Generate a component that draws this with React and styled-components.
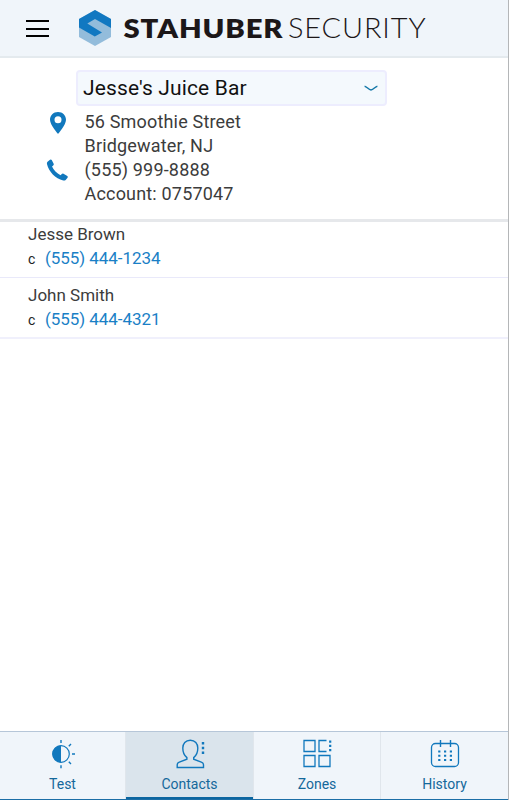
import React, { useState } from "react";
import styled, { createGlobalStyle } from "styled-components";

const contacts = [
  { name: "Jesse Brown", type: "c", phone: "(555) 444-1234" },
  { name: "John Smith", type: "c", phone: "(555) 444-4321" },
];

const Logo = () => (
  <svg width="350" height="40" viewBox="0 0 350 40">
    <path d="M18 2L34 11V29L18 38L2 29V11Z" fill="#93bcdb" />
    <path
      d="M18 2L34 11V20L18 11L10.3 15.6L25 24.4L17.8 28.6L2 19.6V11Z"
      fill="#1178c1"
    />
    <StBrandText
      x="46.5"
      y="29.5"
      $weight={800}
      textLength="160"
      lengthAdjust="spacingAndGlyphs"
    >
      STAHUBER
    </StBrandText>
    <StBrandText
      x="211"
      y="29.5"
      $weight={300}
      textLength="138.5"
      lengthAdjust="spacingAndGlyphs"
    >
      SECURITY
    </StBrandText>
  </svg>
);

const TestIcon = () => (
  <svg width="32" height="32" viewBox="0 0 32 32" fill="none" stroke="#1178bd">
    <circle cx="14" cy="16" r="8.3" strokeWidth="1.2" />
    <path d="M14 7.5A8.5 8.5 0 0 0 14 24.5Z" fill="#1178bd" stroke="none" />
    <path
      d="M14 2V5M14 27.2V30.2M25 16H28M21.8 8.2L24 6M21.8 23.8L24 26"
      strokeWidth="1.4"
    />
  </svg>
);

const ContactsIcon = () => (
  <svg width="32" height="32" viewBox="0 0 32 32" fill="none" stroke="#1178bd">
    <path
      d="M16.3 2.2C11.5 2.2 8.8 5.7 8.8 10C8.8 14 10.2 17.5 12.9 19.6V21.2L5.3 24.2C3.8 24.8 3.2 25.4 3.2 26.7V29.5H29.5V26.7C29.5 25.4 28.8 24.8 27.3 24.2L19.7 21.2V19.6C22.4 17.5 23.8 14 23.8 10C23.8 5.7 21.1 2.2 16.3 2.2Z"
      strokeWidth="1.4"
    />
    <path d="M29 4V6.4M29 8.8V11.2M29 13.6V16" strokeWidth="2.4" />
  </svg>
);

const ZonesIcon = () => (
  <svg width="32" height="32" viewBox="0 0 32 32" fill="none" stroke="#1178bd">
    <path
      d="M3 2.5H14V13.5H3ZM3 17.5H14V28.5H3ZM18 17.5H29V28.5H18ZM25.5 2.5H18V13.5H25.5"
      strokeWidth="1.3"
    />
    <path d="M29.2 2.5V4.7M29.2 6.7V8.9M29.2 11V13.2" strokeWidth="2.2" />
  </svg>
);

const HistoryIcon = () => (
  <svg width="32" height="32" viewBox="0 0 32 32" fill="none" stroke="#1178bd">
    <rect x="2.5" y="5.5" width="27" height="23" rx="4" strokeWidth="1.3" />
    <path d="M11.5 2V9M21.5 2V9" strokeWidth="1.4" />
    <path
      d="M9.2 13.5H23M9.2 17.7H23M9.2 22H23"
      strokeWidth="2"
      strokeDasharray="2.2 3.6"
    />
  </svg>
);

const tabs = [
  { name: "Test", Icon: TestIcon },
  { name: "Contacts", Icon: ContactsIcon },
  { name: "Zones", Icon: ZonesIcon },
  { name: "History", Icon: HistoryIcon },
];

const App = () => {
  const [activeTab, setActiveTab] = useState("Contacts");

  return (
    <>
      <GlobalStyle />
      <StPage>
        <StHeader>
          <StMenuButton aria-label="Menu">
            <StMenuBar />
            <StMenuBar />
            <StMenuBar />
          </StMenuButton>
          <Logo />
        </StHeader>

        <StAccount>
          <StSelect>
            Jesse's Juice Bar
            <svg width="14" height="8" viewBox="0 0 14 8" fill="none">
              <path
                d="M.6 2.2C3 2.6 4.5 6 7 6C9.5 6 11 2.6 13.4 2.2"
                stroke="#1478a8"
                strokeWidth="1.4"
              />
            </svg>
          </StSelect>
          <StDetails>
            <StDetailIcon>
              <svg width="18" height="24" viewBox="0 0 18 24">
                <path
                  d="M9 1C4.3 1 1 4.4 1 8.8C1 14 9 23 9 23S17 14 17 8.8C17 4.4 13.7 1 9 1ZM9 5.3A3.5 3.5 0 1 1 9 12.3A3.5 3.5 0 1 1 9 5.3Z"
                  fill="#1178bd"
                />
              </svg>
            </StDetailIcon>
            <StLines>
              <span>56 Smoothie Street</span>
              <span>Bridgewater, NJ</span>
            </StLines>
          </StDetails>
          <StDetails>
            <StDetailIcon>
              <svg width="24" height="24" viewBox="0 0 24 24">
                <path
                  d="M1.6 2.4L4.2 .2Q5.2 -.5 6 .5L8 4.4Q8.5 5.4 7.5 6.2L6.3 7.4C7.8 11 11.3 14.7 15.2 16.4L16.5 15Q17.3 14.3 18.3 14.8L22.2 17.3Q23.2 18 22.5 19L20.5 21.4Q19.6 22.3 18 21.9C9.8 19.8 2.8 12.6 1 4.6Q.7 3.2 1.6 2.4Z"
                  fill="#1178bd"
                />
              </svg>
            </StDetailIcon>
            <StLines>
              <span>(555) 999-8888</span>
              <span>Account: 0757047</span>
            </StLines>
          </StDetails>
        </StAccount>

        <StContactList>
          {contacts.map((contact) => (
            <StContact key={contact.phone}>
              <StName>{contact.name}</StName>
              <StPhoneRow>
                <StType>{contact.type}</StType>
                <StPhone href="#">{contact.phone}</StPhone>
              </StPhoneRow>
            </StContact>
          ))}
        </StContactList>

        <StTabBar>
          {tabs.map(({ name, Icon }) => (
            <StTab
              key={name}
              $active={name === activeTab}
              onClick={() => setActiveTab(name)}
            >
              <Icon />
              <StTabLabel>{name}</StTabLabel>
            </StTab>
          ))}
        </StTabBar>
      </StPage>
    </>
  );
};

const GlobalStyle = createGlobalStyle`
  * {
    box-sizing: border-box;
  }

  body {
    margin: 0;
    background-color: #fff;
    font-family: Roboto, "Liberation Sans", sans-serif;
  }
`;

const StPage = styled.div`
  width: 509px;
  height: 800px;
  display: flex;
  flex-direction: column;
  border-right: 1px solid #b4b6b8;
`;

const StHeader = styled.header`
  height: 58px;
  padding: 8px 0 8px 26px;
  display: flex;
  align-items: flex-start;
  gap: 28px;
  background-color: #f0f5fa;
  border-bottom: 2px solid #e4eaee;
`;

const StMenuButton = styled.button`
  width: 23px;
  height: 40px;
  padding: 12px 0 0;
  display: flex;
  flex-direction: column;
  gap: 5.5px;
  border: none;
  background: none;
`;

const StMenuBar = styled.span`
  width: 23px;
  height: 2px;
  background-color: #000;
`;

const StBrandText = styled.text`
  font-family: Lato, sans-serif;
  font-size: 26.5px;
  font-weight: ${(props) => props.$weight};
  letter-spacing: 0.8px;
  fill: #1c1718;
`;

const StAccount = styled.section`
  height: 164px;
  padding: 12px 0 0 46px;
  border-bottom: 3px solid #e6e8eb;
`;

const StSelect = styled.div`
  width: 311px;
  height: 36px;
  margin: 0 0 4px 30px;
  padding: 0 7px 1px 5px;
  display: flex;
  align-items: center;
  justify-content: space-between;
  border: 2px solid #ededfe;
  border-radius: 4px;
  background-color: #f4f9fd;
  color: #111;
  font-size: 21px;
  letter-spacing: 0.13px;
`;

const StDetails = styled.div`
  height: 48px;
  display: flex;
  gap: 15.5px;
`;

const StDetailIcon = styled.div`
  width: 23px;
  padding-top: 1px;
  display: flex;
  justify-content: center;
`;

const StLines = styled.div`
  display: flex;
  flex-direction: column;
  color: #3c3c3c;
  font-size: 18px;
  line-height: 24px;
  letter-spacing: 0.18px;
`;

const StContactList = styled.main`
  flex: 1;
`;

const StContact = styled.div`
  height: 56px;
  padding-left: 28px;
  border-bottom: 1px solid #e9e9fa;

  & + & {
    height: 61px;
    padding-top: 5px;
    border-bottom-width: 2px;
    border-bottom-color: #f0f0fc;
  }
`;

const StName = styled.div`
  color: #3c3c3c;
  font-size: 17px;
  line-height: 24px;
`;

const StPhoneRow = styled.div`
  display: flex;
  align-items: baseline;
`;

const StType = styled.span`
  width: 17px;
  color: #222;
  font-size: 14px;
`;

const StPhone = styled.a`
  color: #1a7fc6;
  font-size: 17px;
  line-height: 24px;
  letter-spacing: -0.05px;
  text-decoration: none;
`;

const StTabBar = styled.nav`
  height: 69px;
  display: grid;
  grid-template-columns: 126px 128px 127px 127px;
  border-top: 1px solid #b6c6d8;
  border-bottom: 1px solid #1c6ea6;
  background-color: #f0f5fa;
`;

const StTab = styled.button`
  padding: 6px 0 0;
  display: flex;
  flex-direction: column;
  align-items: center;
  border: none;
  border-right: 1px solid #e0e6ec;
  background-color: ${(props) => (props.$active ? "#dae4ec" : "transparent")};
  box-shadow: ${(props) => (props.$active ? "inset 0 -2px #0c66a0" : "none")};
  font-family: inherit;

  &:last-child {
    border-right: none;
  }
`;

const StTabLabel = styled.span`
  margin-top: 5px;
  color: #14689b;
  font-size: 14px;
  line-height: 18px;
`;

export default App;
